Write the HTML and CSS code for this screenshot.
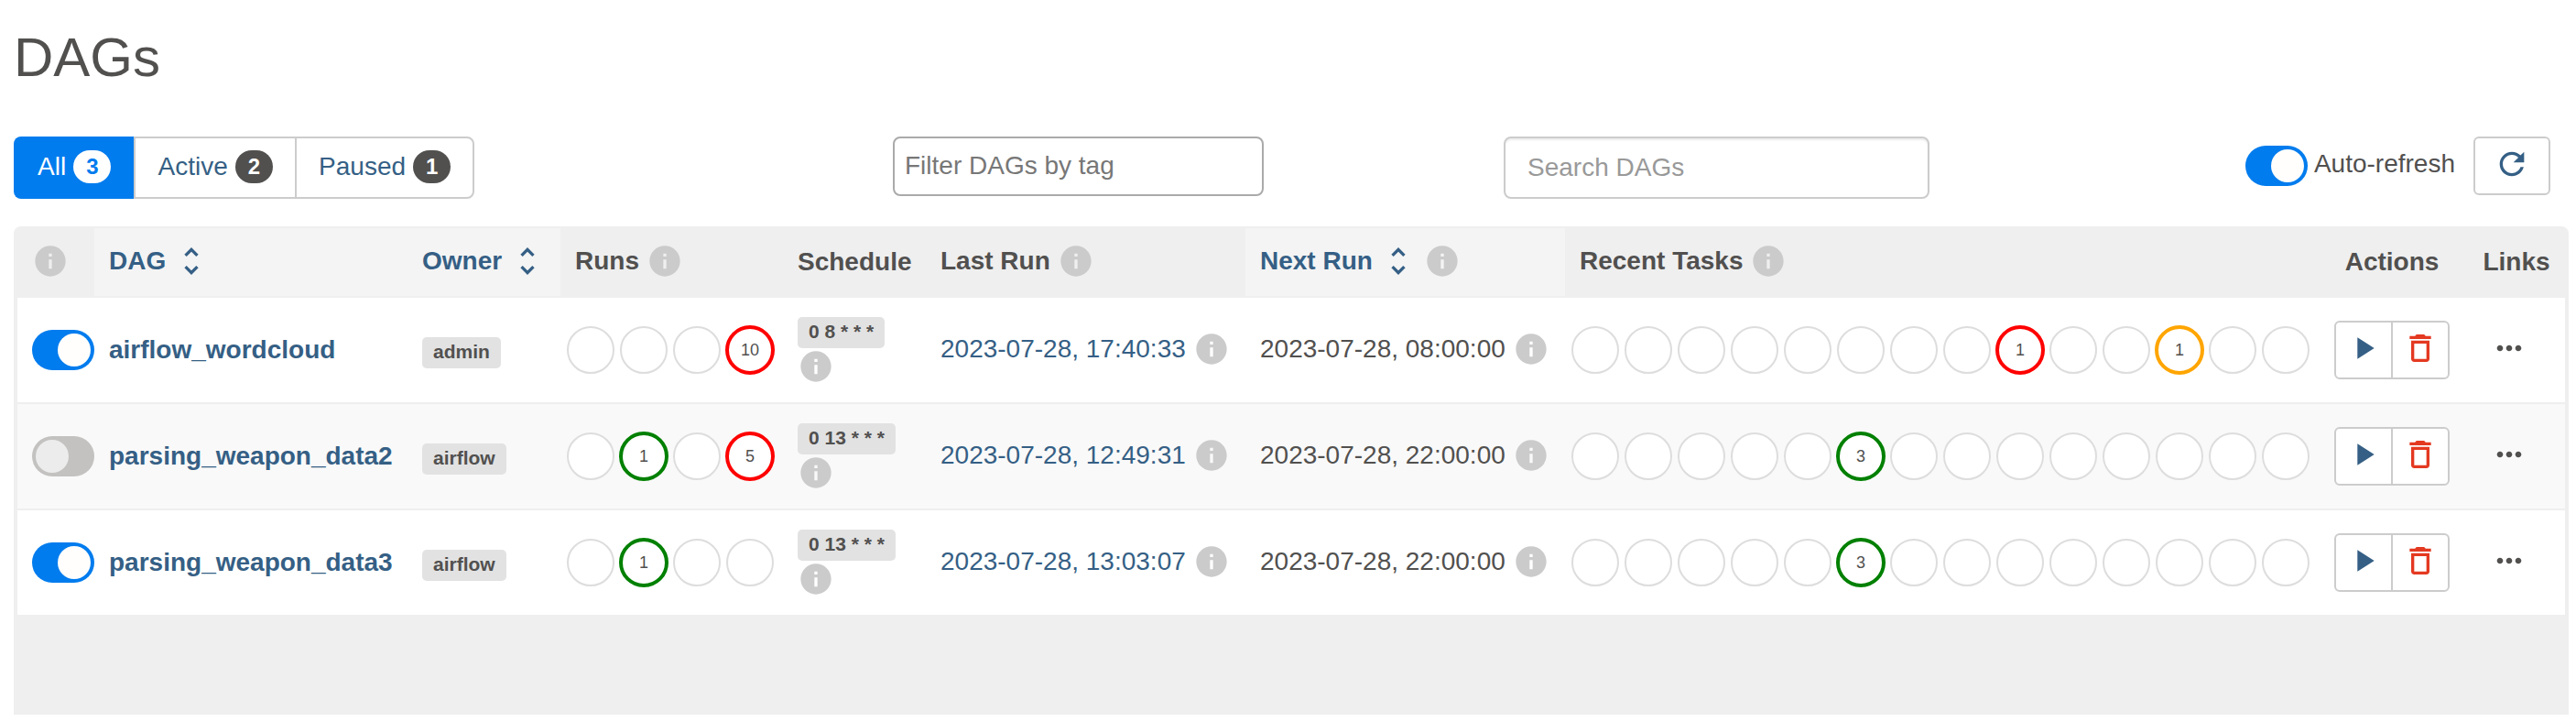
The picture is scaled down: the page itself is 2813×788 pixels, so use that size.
FILE: index.html
```
<!DOCTYPE html>
<html lang="en">
<head>
    <meta charset="UTF-8">
    <meta name="viewport" content="width=device-width, initial-scale=1.0">
    <title>DAGs - Airflow</title>
    <link rel="stylesheet" href="styles.css">
</head>
<body>
    <svg class="icon-defs" aria-hidden="true">
        <symbol id="info" viewBox="0 0 24 24"><path d="M12 2C6.48 2 2 6.48 2 12s4.48 10 10 10 10-4.48 10-10S17.52 2 12 2zm1 15h-2v-6h2v6zm0-8h-2V7h2v2z"/></symbol>
        <symbol id="sort" viewBox="0 0 24 24"><path d="M12 5.83L15.17 9l1.41-1.41L12 3 7.41 7.59 8.83 9 12 5.83zm0 12.34L8.83 15l-1.41 1.41L12 21l4.59-4.59L15.17 15 12 18.17z"/></symbol>
        <symbol id="play" viewBox="0 0 24 24"><path d="M8 5v14l11-7z"/></symbol>
        <symbol id="delete" viewBox="0 0 24 24"><path d="M6 19c0 1.1.9 2 2 2h8c1.1 0 2-.9 2-2V7H6v12zM8 9h8v10H8V9zm7.5-5l-1-1h-5l-1 1H5v2h14V4h-3.5z"/></symbol>
        <symbol id="more" viewBox="0 0 24 24"><path d="M6 10c-1.1 0-2 .9-2 2s.9 2 2 2 2-.9 2-2-.9-2-2-2zm12 0c-1.1 0-2 .9-2 2s.9 2 2 2 2-.9 2-2-.9-2-2-2zm-6 0c-1.1 0-2 .9-2 2s.9 2 2 2 2-.9 2-2-.9-2-2-2z"/></symbol>
        <symbol id="refresh" viewBox="0 0 24 24"><path d="M17.65 6.35C16.2 4.9 14.21 4 12 4c-4.42 0-7.99 3.58-7.99 8s3.57 8 7.99 8c3.73 0 6.84-2.55 7.73-6h-2.08c-.82 2.33-3.04 4-5.65 4-3.31 0-6-2.69-6-6s2.69-6 6-6c1.66 0 3.14.69 4.22 1.78L13 11h7V4l-2.35 2.35z"/></symbol>
    </svg>

    <main class="container">
        <h1>DAGs</h1>

        <div class="toolbar">
            <nav class="status-filter">
                <a href="#" class="active">All <span class="badge">3</span></a>
                <a href="#">Active <span class="badge">2</span></a>
                <a href="#">Paused <span class="badge">1</span></a>
            </nav>
            <div>
                <input type="text" class="tag-filter" placeholder="Filter DAGs by tag" aria-label="Filter DAGs by tag">
            </div>
            <div class="toolbar-right">
                <input type="text" class="search" placeholder="Search DAGs" aria-label="Search DAGs">
                <label class="auto-refresh">
                    <input type="checkbox" class="switch" checked>
                    <span>Auto-refresh</span>
                </label>
                <button type="button" class="btn refresh" aria-label="Refresh"><svg class="icon"><use href="#refresh"/></svg></button>
            </div>
        </div>

        <div class="table-wrap">
            <table>
                <colgroup>
                    <col class="col-toggle">
                    <col>
                    <col class="col-owner">
                    <col class="col-runs">
                    <col class="col-schedule">
                    <col class="col-date">
                    <col class="col-date">
                    <col class="col-tasks">
                    <col class="col-actions">
                    <col class="col-links">
                </colgroup>
                <thead>
                    <tr>
                        <th><div class="icon-line"><svg class="icon info"><use href="#info"/></svg></div></th>
                        <th class="sortable"><div class="icon-line"><a href="#">DAG</a><svg class="icon"><use href="#sort"/></svg></div></th>
                        <th class="sortable"><div class="icon-line"><a href="#">Owner</a><svg class="icon"><use href="#sort"/></svg></div></th>
                        <th><div class="icon-line">Runs<svg class="icon info"><use href="#info"/></svg></div></th>
                        <th>Schedule</th>
                        <th><div class="icon-line">Last Run<svg class="icon info"><use href="#info"/></svg></div></th>
                        <th class="sortable"><div class="icon-line"><a href="#">Next Run</a><svg class="icon"><use href="#sort"/></svg><svg class="icon info"><use href="#info"/></svg></div></th>
                        <th><div class="icon-line">Recent Tasks<svg class="icon info"><use href="#info"/></svg></div></th>
                        <th class="center">Actions</th>
                        <th class="center">Links</th>
                    </tr>
                </thead>
                <tbody>
                    <tr>
                        <td class="toggle-cell"><input type="checkbox" class="switch" aria-label="Toggle airflow_wordcloud" checked></td>
                        <td><a href="#" class="dag-name">airflow_wordcloud</a></td>
                        <td><span class="label">admin</span></td>
                        <td class="circles-cell">
                            <div class="circles">
                                <span></span><span></span><span></span><span class="failed">10</span>
                            </div>
                        </td>
                        <td><div class="schedule"><span class="label">0 8 * * *</span><svg class="icon info"><use href="#info"/></svg></div></td>
                        <td><div class="icon-line"><a href="#">2023-07-28, 17:40:33</a><svg class="icon info"><use href="#info"/></svg></div></td>
                        <td><div class="icon-line">2023-07-28, 08:00:00<svg class="icon info"><use href="#info"/></svg></div></td>
                        <td class="circles-cell">
                            <div class="circles">
                                <span></span><span></span><span></span><span></span><span></span><span></span><span></span>
                                <span></span><span class="failed">1</span><span></span><span></span><span class="upstream-failed">1</span><span></span><span></span>
                            </div>
                        </td>
                        <td>
                            <div class="btn-group">
                                <button type="button" class="btn" aria-label="Trigger DAG"><svg class="icon"><use href="#play"/></svg></button>
                                <button type="button" class="btn delete" aria-label="Delete DAG"><svg class="icon"><use href="#delete"/></svg></button>
                            </div>
                        </td>
                        <td class="links-cell"><button type="button" class="more" aria-label="Links"><svg class="icon"><use href="#more"/></svg></button></td>
                    </tr>
                    <tr>
                        <td class="toggle-cell"><input type="checkbox" class="switch" aria-label="Toggle parsing_weapon_data2"></td>
                        <td><a href="#" class="dag-name">parsing_weapon_data2</a></td>
                        <td><span class="label">airflow</span></td>
                        <td class="circles-cell">
                            <div class="circles">
                                <span></span><span class="success">1</span><span></span><span class="failed">5</span>
                            </div>
                        </td>
                        <td><div class="schedule"><span class="label">0 13 * * *</span><svg class="icon info"><use href="#info"/></svg></div></td>
                        <td><div class="icon-line"><a href="#">2023-07-28, 12:49:31</a><svg class="icon info"><use href="#info"/></svg></div></td>
                        <td><div class="icon-line">2023-07-28, 22:00:00<svg class="icon info"><use href="#info"/></svg></div></td>
                        <td class="circles-cell">
                            <div class="circles">
                                <span></span><span></span><span></span><span></span><span></span><span class="success">3</span><span></span>
                                <span></span><span></span><span></span><span></span><span></span><span></span><span></span>
                            </div>
                        </td>
                        <td>
                            <div class="btn-group">
                                <button type="button" class="btn" aria-label="Trigger DAG"><svg class="icon"><use href="#play"/></svg></button>
                                <button type="button" class="btn delete" aria-label="Delete DAG"><svg class="icon"><use href="#delete"/></svg></button>
                            </div>
                        </td>
                        <td class="links-cell"><button type="button" class="more" aria-label="Links"><svg class="icon"><use href="#more"/></svg></button></td>
                    </tr>
                    <tr>
                        <td class="toggle-cell"><input type="checkbox" class="switch" aria-label="Toggle parsing_weapon_data3" checked></td>
                        <td><a href="#" class="dag-name">parsing_weapon_data3</a></td>
                        <td><span class="label">airflow</span></td>
                        <td class="circles-cell">
                            <div class="circles">
                                <span></span><span class="success">1</span><span></span><span></span>
                            </div>
                        </td>
                        <td><div class="schedule"><span class="label">0 13 * * *</span><svg class="icon info"><use href="#info"/></svg></div></td>
                        <td><div class="icon-line"><a href="#">2023-07-28, 13:03:07</a><svg class="icon info"><use href="#info"/></svg></div></td>
                        <td><div class="icon-line">2023-07-28, 22:00:00<svg class="icon info"><use href="#info"/></svg></div></td>
                        <td class="circles-cell">
                            <div class="circles">
                                <span></span><span></span><span></span><span></span><span></span><span class="success">3</span><span></span>
                                <span></span><span></span><span></span><span></span><span></span><span></span><span></span>
                            </div>
                        </td>
                        <td>
                            <div class="btn-group">
                                <button type="button" class="btn" aria-label="Trigger DAG"><svg class="icon"><use href="#play"/></svg></button>
                                <button type="button" class="btn delete" aria-label="Delete DAG"><svg class="icon"><use href="#delete"/></svg></button>
                            </div>
                        </td>
                        <td class="links-cell"><button type="button" class="more" aria-label="Links"><svg class="icon"><use href="#more"/></svg></button></td>
                    </tr>
                </tbody>
            </table>
        </div>
    </main>
</body>
</html>
```

FILE: styles.css
```
* {
    box-sizing: border-box;
}
body {
    margin: 0;
    background-color: #fff;
    color: #51504f;
    font-family: "Liberation Sans", Arial, sans-serif;
    font-size: 28px;
    line-height: 40px;
}
a {
    color: #355f85;
    text-decoration: none;
}
input, button {
    font: inherit;
}
.icon-defs {
    display: none;
}
.icon {
    display: block;
    flex: none;
    width: 40px;
    height: 40px;
    fill: currentColor;
}
.icon.info {
    color: #cbcbcb;
}
.container {
    padding: 30px 8px 8px 15px;
}
h1 {
    margin: 0 0 53px;
    font-size: 60px;
    line-height: 66px;
    font-weight: normal;
}

/* Toolbar */
.toolbar {
    display: grid;
    grid-template-columns: 960fr 667fr 1163fr;
    align-items: start;
    margin-bottom: 30px;
}
.status-filter {
    display: flex;
}
.status-filter a {
    display: flex;
    align-items: center;
    gap: 8px;
    height: 68px;
    padding: 0 24px 2px;
    border: 2px solid #ccc;
    margin-right: -2px;
}
.status-filter a:first-child {
    border-radius: 8px 0 0 8px;
}
.status-filter a:last-child {
    border-radius: 0 8px 8px 0;
}
.status-filter a.active {
    background-color: #017cee;
    border-color: #017cee;
    border-right: 0;
    margin-right: 0;
    padding-right: 25px;
    color: #fff;
}
.badge {
    padding: 6px 14px;
    border-radius: 20px;
    background-color: #51504f;
    color: #fff;
    font-size: 24px;
    line-height: 24px;
    font-weight: bold;
}
.active .badge {
    background-color: #fff;
    color: #017cee;
}
.tag-filter, .search {
    display: block;
    max-width: 100%;
    border: 2px solid #ccc;
    border-radius: 8px;
    background-color: #fff;
    color: #51504f;
}
.tag-filter {
    width: 405px;
    height: 65px;
    padding: 0 11px 2px;
    border-color: #aaa;
}
.tag-filter::placeholder {
    color: #777;
}
.search {
    width: 465px;
    height: 68px;
    padding: 0 24px;
    box-shadow: inset 0 2px 2px rgba(0, 0, 0, 0.075);
}
.search::placeholder {
    color: #999;
}
.toolbar-right {
    display: flex;
    padding-right: 20px;
}
.auto-refresh {
    display: flex;
    align-items: center;
    gap: 7px;
    height: 64px;
    margin: 0 20px 0 auto;
}
.auto-refresh span {
    padding-bottom: 4px;
}
.switch {
    appearance: none;
    display: block;
    width: 68px;
    height: 44px;
    margin: 0;
    padding: 4px;
    border-radius: 22px;
    background-color: #c3c2c1;
    cursor: pointer;
}
.switch::before {
    content: "";
    display: block;
    width: 36px;
    height: 36px;
    border-radius: 50%;
    background-color: #ececec;
}
.switch:checked {
    background-color: #017cee;
}
.switch:checked::before {
    margin-left: auto;
    background-color: #fffefd;
}
.btn {
    display: flex;
    align-items: center;
    justify-content: center;
    width: 64px;
    height: 64px;
    padding: 0 0 4px;
    border: 2px solid #ccc;
    border-radius: 6px;
    background-color: #fff;
    color: #355f85;
    cursor: pointer;
}
.btn.refresh {
    width: 84px;
}
.btn.delete {
    color: #e43921;
}
.btn-group {
    display: flex;
    justify-content: center;
}
.btn-group .btn:first-child {
    border-radius: 6px 0 0 6px;
    margin-right: -2px;
}
.btn-group .btn:last-child {
    border-radius: 0 6px 6px 0;
}

/* DAGs table */
.table-wrap {
    padding: 2px 4px 109px;
    border-radius: 8px 8px 0 0;
    background-color: #efefef;
}
table {
    width: 100%;
    table-layout: fixed;
    border-collapse: separate;
    border-spacing: 0;
}
.col-toggle { width: 84px; }
.col-owner { width: 167px; }
.col-runs { width: 243px; }
.col-schedule { width: 156px; }
.col-date { width: 349px; }
.col-tasks { width: 820px; }
.col-actions { width: 166px; }
.col-links { width: 106px; }
th, td {
    padding: 0 16px;
    text-align: left;
    vertical-align: middle;
    white-space: nowrap;
}
th {
    height: 74px;
}
th.sortable {
    background-color: #f4f4f4;
    color: #355f85;
}
th.center {
    padding: 0;
    text-align: center;
}
td {
    height: 116px;
    border-top: 2px solid #efefef;
    background-color: #fff;
}
tbody tr:nth-child(even) td {
    background-color: #f9f9f9;
}
.icon-line {
    display: flex;
    align-items: center;
    gap: 8px;
    padding-bottom: 3px;
}
.toggle-cell {
    padding: 0 0 0 16px;
}
.dag-name {
    font-weight: bold;
}
.label {
    display: inline-block;
    padding: 5px 12px 7px;
    border-radius: 5px;
    background-color: #e2e2e2;
    font-size: 21px;
    line-height: 22px;
    font-weight: bold;
}
.circles-cell {
    padding: 0 4px;
}
.circles {
    display: flex;
}
.circles span {
    flex: none;
    width: 52px;
    height: 52px;
    margin: 3px;
    border: 2px solid #ddd;
    border-radius: 50%;
    background-color: #fff;
    font-size: 18px;
    line-height: 46px;
    text-align: center;
}
.circles .success, .circles .failed, .circles .upstream-failed {
    width: 54px;
    height: 54px;
    margin: 2px;
    border-width: 4px;
}
.circles .success {
    border-color: green;
}
.circles .failed {
    border-color: red;
}
.circles .upstream-failed {
    border-color: orange;
}
.schedule {
    display: flex;
    flex-direction: column;
    align-items: flex-start;
    padding-top: 2px;
}
.links-cell {
    padding: 0 16px 0 0;
}
.more {
    display: block;
    margin: 0 auto;
    padding: 0 0 4px;
    border: 0;
    background: none;
    color: #51504f;
    cursor: pointer;
}
```
